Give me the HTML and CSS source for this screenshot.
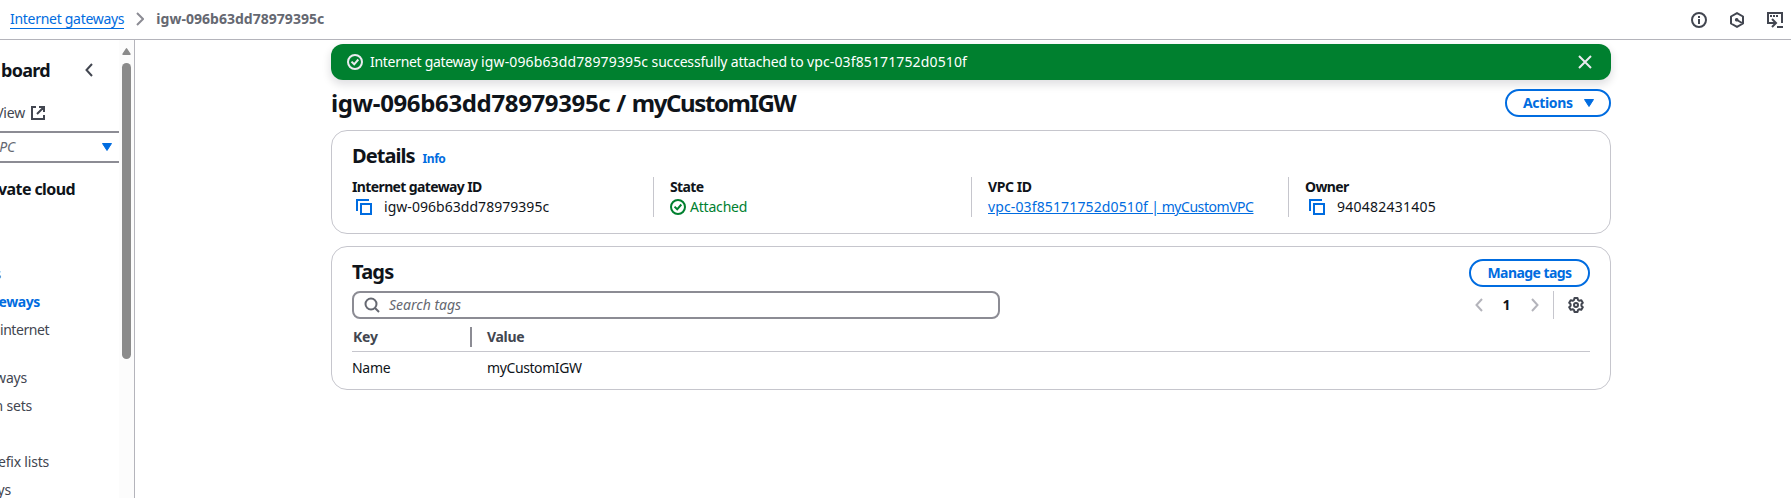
FILE: index.html
```html
<!DOCTYPE html>
<html lang="en">
<head>
<meta charset="utf-8">
<title>Internet gateway details</title>
<link rel="stylesheet" href="styles.css">
</head>
<body>
<header class="topbar">
  <nav class="crumbs">
    <a class="crumb-link" href="#">Internet gateways</a>
    <svg class="crumb-sep" width="8" height="14" viewBox="0 0 8 14"><path d="M1 1l6 6-6 6" fill="none" stroke="#8c8c94" stroke-width="2"/></svg>
    <span class="crumb-current">igw-096b63dd78979395c</span>
  </nav>
  <div class="tools">
    <svg width="16" height="16" viewBox="0 0 16 16" fill="none" stroke="#424650" stroke-width="2"><circle cx="8" cy="8" r="7"/><path d="M8 7v5M8 4v2"/></svg>
    <svg width="16" height="16" viewBox="0 0 16 16" fill="none" stroke="#424650" stroke-width="2"><path d="M8 1.100l6 3.400v7L8 14.900 2 11.500v-7z" stroke-linejoin="round"/><path d="M8 8l5 3"/><circle cx="7.700" cy="7.800" r="1.200" fill="#424650" stroke-width="1.200"/></svg>
    <svg width="16" height="16" viewBox="0 0 16 16" fill="none" stroke="#424650" stroke-width="2"><path d="M1 9V1h14v10M10 15h6M1 8v3h7M5 7l4 4-4 4"/><path d="M3 4h2M6 4h2M9 4h2"/></svg>
  </div>
</header>
<div class="shell">
  <aside class="sidebar">
    <div class="side-content">
      <div class="side-head"><span class="side-title">board</span>
        <svg width="8" height="14" viewBox="0 0 8 14"><path d="M7 1L1.500 7 7 13" fill="none" stroke="#424650" stroke-width="2"/></svg></div>
      <div class="side-view"><span class="end e-view">View</span>
        <svg width="14" height="14" viewBox="0 0 14 14" fill="none" stroke="#424650" stroke-width="2"><path d="M5 1H1v12h12V9M8 1h5v5M13 1L6 8"/></svg></div>
      <div class="select"><span class="end e-pc">PC</span>
        <svg width="10" height="8" viewBox="0 0 10 8"><path d="M.5.5h9L5 7.500z" fill="#006ce0" stroke="#006ce0" stroke-linejoin="round"/></svg></div>
      <div class="side-section"><span class="end e-cloud">vate cloud</span></div>
      <ul class="links">
        <li class="end e-s">s</li>
        <li class="end e-eways active">teways</li>
        <li class="end e-internet">internet</li>
      </ul>
      <ul class="links second">
        <li class="end e-ways">ways</li>
        <li class="end e-sets">n sets</li>
      </ul>
      <ul class="links third">
        <li class="end e-lists">efix lists</li>
        <li class="end e-ys">ys</li>
      </ul>
    </div>
    <div class="scrollbar">
      <svg width="9" height="7" viewBox="0 0 9 7"><path d="M4.500.8L8 6.200H1z" fill="#8b8b8b" stroke="#8b8b8b" stroke-width="1.400" stroke-linejoin="round"/></svg>
      <div class="thumb"></div>
    </div>
  </aside>
  <main class="main">
    <div class="flash">
      <svg width="16" height="16" viewBox="0 0 16 16" fill="none" stroke="#ebebf0" stroke-width="2"><circle cx="8" cy="8" r="7"/><path d="M4.500 7.600l2.700 2.700L11.300 5.500"/></svg>
      <span class="flash-text"><span class="f-lead">Internet gateway </span><span class="f-id">igw-096b63dd78979395c</span><span class="f-mid"> successfully attached to </span><span class="f-id">vpc-03f85171752d0510f</span></span>
      <svg class="close" width="14" height="14" viewBox="0 0 14 14"><path d="M1 1l12 12M13 1L1 13" fill="none" stroke="#ebebf0" stroke-width="2"/></svg>
    </div>
    <div class="title-row">
      <h1>igw-096b63dd78979395c / <span class="title-name">myCustomIGW</span></h1>
      <button class="btn actions"><span>Actions</span><svg width="10" height="8" viewBox="0 0 10 8"><path d="M.5.5h9L5 7.500z" fill="#006ce0" stroke="#006ce0" stroke-linejoin="round"/></svg></button>
    </div>
    <section class="card details">
      <div class="card-head"><h2 class="h-details">Details</h2><a class="info">Info</a></div>
      <div class="cols">
        <div class="col">
          <div class="label l-igw">Internet gateway ID</div>
          <div class="value"><svg class="copy" width="16" height="16" viewBox="0 0 16 16" fill="none" stroke="#006ce0" stroke-width="2"><path d="M1 12V1h12M5 5h10v10H5z"/></svg><span class="v-igw">igw-096b63dd78979395c</span></div>
        </div>
        <div class="col">
          <div class="label l-state">State</div>
          <div class="value ok"><svg width="16" height="16" viewBox="0 0 16 16" fill="none" stroke="#00802f" stroke-width="2"><circle cx="8" cy="8" r="7"/><path d="M4.500 7.600l2.700 2.700L11.300 5.500"/></svg><span class="v-att">Attached</span></div>
        </div>
        <div class="col">
          <div class="label l-vpc">VPC ID</div>
          <div class="value"><a class="v-vpc" href="#">vpc-03f85171752d0510f<span class="v-vpc-name"> | myCustomVPC</span></a></div>
        </div>
        <div class="col">
          <div class="label l-owner">Owner</div>
          <div class="value"><svg class="copy" width="16" height="16" viewBox="0 0 16 16" fill="none" stroke="#006ce0" stroke-width="2"><path d="M1 12V1h12M5 5h10v10H5z"/></svg><span class="v-owner">940482431405</span></div>
        </div>
      </div>
    </section>
    <section class="card tags">
      <div class="tags-head"><h2 class="h-tags">Tags</h2><button class="btn manage"><span>Manage tags</span></button></div>
      <div class="filter-row">
        <div class="search">
          <svg width="16" height="16" viewBox="0 0 16 16" fill="none" stroke="#656871" stroke-width="2"><circle cx="7" cy="7" r="5.500"/><path d="M11 11l4 4"/></svg>
          <span class="placeholder">Search tags</span>
        </div>
        <div class="pager">
          <svg width="8" height="14" viewBox="0 0 8 14"><path d="M7 1L1.500 7 7 13" fill="none" stroke="#b4b4bb" stroke-width="2"/></svg>
          <span class="page">1</span>
          <svg width="8" height="14" viewBox="0 0 8 14"><path d="M1 1l5.500 6L1 13" fill="none" stroke="#b4b4bb" stroke-width="2"/></svg>
          <div class="gear"><svg width="16" height="16" viewBox="0 0 16 16" fill="none" stroke="#424650" stroke-width="2" stroke-linejoin="round"><path d="M6.500 1h3l.5 2 1.300.8 2-.6 1.500 2.600L13.400 7.200v1.600l1.400 1.400-1.500 2.600-2-.6-1.300.8-.5 2h-3l-.5-2-1.300-.8-2 .6-1.500-2.600L2.600 8.800V7.200L1.200 5.800l1.500-2.600 2 .6L6 3z"/><circle cx="8" cy="8" r="2"/></svg></div>
        </div>
      </div>
      <div class="trow thead"><div class="cell key"><span class="t-key">Key</span></div><div class="cell"><span class="t-value">Value</span></div></div>
      <div class="trow"><div class="cell first"><span class="t-name">Name</span></div><div class="cell"><span class="t-igw">myCustomIGW</span></div></div>
    </section>
  </main>
</div>
</body>
</html>
```
FILE: styles.css
```css
* { box-sizing: border-box; }
body { margin: 0; height: 498px; overflow: hidden; background: #fff; color: #0f141a; font: 14px/20px "Noto Sans", "Open Sans", sans-serif; white-space: nowrap; }
svg { display: block; flex: none; }
h1, h2, ul { margin: 0; padding: 0; list-style: none; }
a { color: #006ce0; }

.topbar { height: 40px; border-bottom: 1px solid #b4b4bb; display: flex; justify-content: space-between; padding: 0 8px 0 10px; }
.crumbs { display: flex; align-items: center; padding-bottom: 1px; }
.crumb-link { text-decoration: none; border-bottom: 1px solid #006ce0; height: 20px; line-height: 20px; letter-spacing: -.29px; }
.crumb-sep { margin: 0 12px 0 12px; }
.crumb-current { font-weight: 700; color: #656871; letter-spacing: .03px; }
.tools { display: flex; align-items: center; gap: 22px; }

.shell { display: flex; height: 458px; }
.sidebar { width: 135px; border-right: 1px solid #b4b4bb; display: flex; flex: none; }
.side-content { width: 119px; overflow: hidden; color: #424650; }
.end { display: flex; justify-content: flex-end; flex: none; letter-spacing: -.2px; }
.side-head { display: flex; align-items: center; height: 24px; margin-top: 18px; padding-left: 1px; }
.side-title { width: 49px; margin-right: 35px; font-size: 18px; font-weight: 700; letter-spacing: -.7px; color: #0f141a; }
.side-view { display: flex; align-items: center; gap: 6px; margin-top: 21px; height: 20px; }
.e-view { width: 25px; }
.select { display: flex; align-items: center; justify-content: space-between; height: 32px; margin-top: 8px; padding-right: 7px; border: solid #8c8c94; border-width: 2px 0; color: #656871; font-style: italic; }
.e-pc { width: 15px; }
.side-section { height: 24px; margin-top: 14px; font-size: 16px; line-height: 24px; font-weight: 700; color: #0f141a; }
.e-cloud { width: 75px; letter-spacing: -.6px; }
.links { display: flex; flex-direction: column; gap: 8px; margin-top: 63px; }
.second { margin-top: 28px; }
.third { margin-top: 36px; }
.e-s { width: 1px; }
.e-eways { width: 40px; }
.active { color: #006ce0; font-weight: 700; letter-spacing: -.4px; }
.e-internet { width: 49px; letter-spacing: -.45px; }
.e-ways { width: 27px; }
.e-sets { width: 32px; }
.e-lists { width: 49px; }
.e-ys { width: 11px; }
.scrollbar { width: 15px; background: #fcfcfc; padding: 8px 0 0 3px; }
.thumb { width: 9px; height: 296px; margin-top: 8px; border-radius: 5px; background: #8b8b8b; }

.main { width: 1280px; margin-left: 196px; flex: none; }
.flash { display: flex; align-items: center; height: 36px; margin-top: 4px; padding: 0 19px 0 16px; border-radius: 12px; background: #00802f; color: #fff; box-shadow: 0 4px 8px 1px rgba(0, 7, 22, .12); }
.flash-text { margin-left: 7px; }
.f-lead { letter-spacing: -.3px; }
.f-id { letter-spacing: .13px; }
.f-mid { letter-spacing: -.19px; }
.close { margin-left: auto; }
.title-row { display: flex; align-items: center; justify-content: space-between; height: 28px; margin-top: 9px; }
h1 { font-size: 24px; line-height: 30px; font-weight: 700; letter-spacing: -.36px; padding-bottom: 1px; }
.title-name { letter-spacing: -1.4px; }
.btn { display: flex; align-items: center; height: 28px; padding: 0 16px; border: 2px solid #006ce0; border-radius: 14px; background: #fff; color: #006ce0; font: 700 14px/20px "Noto Sans", sans-serif; white-space: nowrap; }
.actions { width: 106px; justify-content: space-between; padding: 0 15px 0 16px; letter-spacing: -.35px; }
.manage { width: 121px; justify-content: center; padding: 0; letter-spacing: -.55px; }

.card { border: 1px solid #c6c6cd; border-radius: 16px; }
.details { height: 104px; margin-top: 13px; padding: 13px 20px 0; }
.card-head { display: flex; align-items: baseline; gap: 8px; height: 24px; }
h2 { font-size: 20px; line-height: 24px; font-weight: 700; letter-spacing: -.95px; }
.info { font-size: 12px; line-height: 20px; font-weight: 700; letter-spacing: -.45px; }
.cols { display: grid; grid-template-columns: 301px 318px 317px 302px; margin-top: 9px; }
.col + .col { border-left: 1px solid #c6c6cd; padding-left: 16px; }
.label { font-weight: 700; letter-spacing: -.62px; }
.l-vpc { letter-spacing: -.4px; }
.value { display: flex; align-items: center; height: 20px; }
.copy { margin: 0 12px 0 4px; }
.v-igw { letter-spacing: .04px; }
.v-att { letter-spacing: -.2px; }
.v-vpc { letter-spacing: .13px; }
.v-vpc-name { letter-spacing: -.45px; }
.v-owner { letter-spacing: .25px; }
.ok { color: #00802f; gap: 4px; }

.tags { height: 144px; margin-top: 12px; padding: 12px 20px 0; }
.tags-head { display: flex; align-items: center; justify-content: space-between; height: 28px; }
.h-tags { letter-spacing: -.8px; padding-bottom: 2px; }
.filter-row { display: flex; justify-content: space-between; margin-top: 4px; }
.search { display: flex; align-items: center; gap: 9px; width: 648px; height: 28px; padding-left: 10px; border: 2px solid #8c8c94; border-radius: 8px; }
.placeholder { color: #656871; font-style: italic; }
.pager { display: flex; align-items: center; height: 28px; }
.page { width: 48px; padding-right: 1px; text-align: center; font-weight: 700; }
.gear { display: flex; align-items: center; height: 28px; margin-left: 14px; padding: 0 6px 0 14px; border-left: 1px solid #c6c6cd; }
.trow { display: grid; grid-template-columns: 120px 1fr; height: 33px; }
.thead { border-bottom: 1px solid #c6c6cd; color: #424650; font-weight: 700; }
.cell { display: flex; align-items: center; padding-left: 15px; height: 32px; }
.thead .cell { height: 20px; margin-top: 8px; }
.trow .key { padding-left: 1px; border-right: 2px solid #8c8c94; }
.trow .first { padding-left: 0; }
.t-key { letter-spacing: -.2px; }
.t-value { letter-spacing: -.3px; }
.t-name { letter-spacing: -.3px; }
.t-igw { letter-spacing: -.4px; }
```
